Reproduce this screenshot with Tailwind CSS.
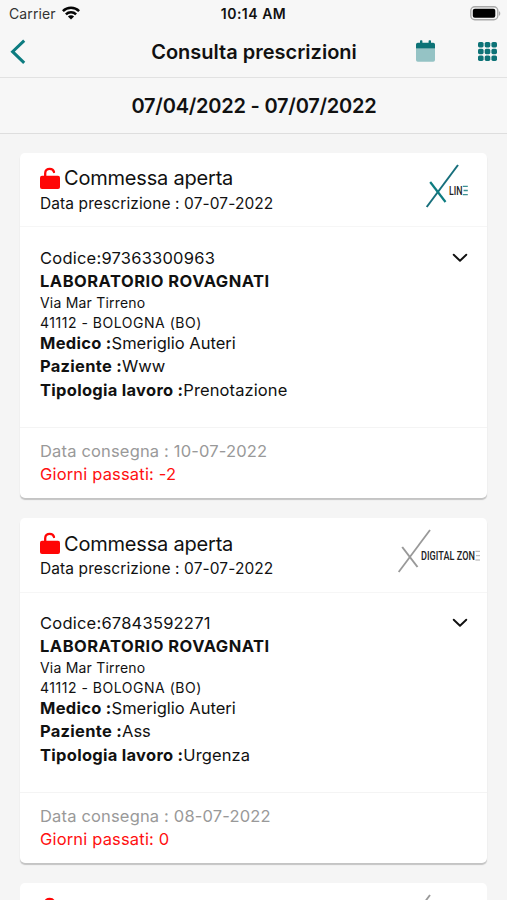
<!DOCTYPE html>
<html lang="it">
<head>
    <meta charset="UTF-8">
    <meta name="viewport" content="width=device-width, initial-scale=1.0">
    <title>Consulta prescrizioni</title>
    <script src="https://cdn.jsdelivr.net/npm/@tailwindcss/browser@4"></script>
</head>
<body class="bg-[#f5f5f5] font-['Inter','Liberation_Sans',sans-serif] text-[#111] h-[900px] overflow-hidden">

    <!-- Shared icons -->
    <svg class="hidden">
        <symbol id="unlock" viewBox="0 0 20 22">
            <path d="M5.2 10V6.2C5.2 3.4 7.2 1.8 9.7 1.8c2.2 0 3.8 1.2 4.3 3.2" fill="none" stroke="#ff0505" stroke-width="2.3" stroke-linecap="round"/>
            <rect x="0" y="8.8" width="20" height="13.2" rx="2" fill="#ff0505"/>
        </symbol>
        <symbol id="chevron" viewBox="0 0 16 10">
            <path d="M1.7 1.7 8 7.8l6.3-6.1" fill="none" stroke="#111" stroke-width="1.9" stroke-linecap="round" stroke-linejoin="round"/>
        </symbol>
    </svg>

    <div class="bg-[#f7f7f7]">
        <!-- Status bar -->
        <div class="relative flex h-[27px] items-center justify-between pl-[9px] pr-[6px]">
            <div class="flex items-center gap-[6px]">
                <span class="text-[14px] tracking-[0.12px] text-[#333]">Carrier</span>
                <svg class="mb-[2px] h-[14px] w-[18px]" viewBox="0 0 18 14" fill="none" stroke="#050505" stroke-width="2.5">
                    <path d="M.9 5.1a11.5 11.5 0 0 1 16.2 0"/>
                    <path d="M3.9 8.4a7.2 7.2 0 0 1 10.2 0"/>
                    <path d="M9 13.6 5.9 10.5a4.4 4.4 0 0 1 6.2 0z" fill="#050505" stroke="none"/>
                </svg>
            </div>
            <span class="absolute inset-x-0 text-center text-[14px] font-semibold tracking-[0.5px]">10:14 AM</span>
            <svg class="h-[15px] w-[31px]" viewBox="0 0 31 15">
                <rect x="0.8" y="0.8" width="27" height="13" rx="4" fill="#f7f7f7" stroke="#a9a9a9" stroke-width="1.4"/>
                <rect x="2.8" y="2.8" width="22.5" height="9" rx="2" fill="#000"/>
                <path d="M29 5.2c1.7.6 1.7 4 0 4.6z" fill="#a9a9a9"/>
            </svg>
        </div>

        <!-- Navigation bar -->
        <div class="relative flex h-[51px] items-center justify-between border-b border-[#e2e2e2] pl-[10px] pr-[10px]">
            <svg class="h-[26px] w-[16px]" viewBox="0 0 16 26">
                <path d="M14.2 1.6 2.6 12.7l11.6 11.2" fill="none" stroke="#0d7c80" stroke-width="3"/>
            </svg>
            <h1 class="absolute inset-x-0 pl-px text-center text-[20px] font-semibold">Consulta prescrizioni</h1>
            <div class="mb-[2px] flex items-center gap-[43px]">
                <svg class="h-[22px] w-[19px]" viewBox="0 0 19 22">
                    <path d="M0 8.5h19V20a1.8 1.8 0 0 1-1.8 1.8H1.8A1.8 1.8 0 0 1 0 20z" fill="#95c3c5"/>
                    <path d="M1.8 2.8H4V1a.8.8 0 0 1 .8-.8h.8a.8.8 0 0 1 .8.8v1.8h6.2V1a.8.8 0 0 1 .8-.8h.8A.8.8 0 0 1 15 1v1.8h2.2A1.8 1.8 0 0 1 19 4.6v3.9H0V4.6a1.8 1.8 0 0 1 1.8-1.8z" fill="#0d7377"/>
                </svg>
                <svg class="h-[19px] w-[19px]" viewBox="0 0 19 19" fill="#0d7377">
                    <rect width="5.6" height="5.4" rx="1.6"/><rect x="6.7" width="5.6" height="5.4" rx="1.6"/><rect x="13.4" width="5.6" height="5.4" rx="1.6"/>
                    <rect y="6.8" width="5.6" height="5.4" rx="1.6"/><rect x="6.7" y="6.8" width="5.6" height="5.4" rx="1.6"/><rect x="13.4" y="6.8" width="5.6" height="5.4" rx="1.6"/>
                    <rect y="13.5" width="5.6" height="5.4" rx="1.6"/><rect x="6.7" y="13.5" width="5.6" height="5.4" rx="1.6"/><rect x="13.4" y="13.5" width="5.6" height="5.4" rx="1.6"/>
                </svg>
            </div>
        </div>

        <!-- Date range -->
        <div class="flex h-[56px] items-center justify-center border-b border-[#dedede] pl-px text-[20px] font-semibold tracking-[-0.23px]">
            07/04/2022 - 07/07/2022
        </div>
    </div>

    <!-- Prescriptions -->
    <main class="flex flex-col gap-5 px-5 pt-[19px]">
        <section class="h-[345px] shrink-0 rounded-[5px] bg-white shadow-[0_2px_1px_#c4c4c4]">
            <div class="flex h-[74px] justify-between border-b border-[#f6f6f6] pl-5 pt-[13px]">
                <div>
                    <div class="flex h-[25px] items-center gap-[4px]">
                        <svg class="mb-[2px] h-[22px] w-[20px]"><use href="#unlock"/></svg>
                        <h2 class="-mt-px text-[20px] tracking-[-0.2px]">Commessa aperta</h2>
                    </div>
                    <p class="text-[15.5px] leading-[25px] tracking-[0.1px]">Data prescrizione : 07-07-2022</p>
                </div>
                <svg class="-mt-[3px] mr-[18px] h-[48px] w-[44px] overflow-visible" viewBox="0 0 44 48">
                    <path d="M33 2 1.7 44" stroke="#176f7c" stroke-width="2"/>
                    <path d="m5.2 19 15.3 20" stroke="#0d7c80" stroke-width="2.2"/>
                    <text x="24" y="32" textLength="13.5" lengthAdjust="spacingAndGlyphs" font-family="Roboto" font-size="13" font-weight="500" fill="#222">LIN</text>
                    <path d="M37.8 23.3h5M38.6 27.5h4.2M37.8 31.7h5" stroke="#3b9093" stroke-width="1.3"/>
                </svg>
            </div>
            <div class="flex h-[200px] justify-between pl-5 pr-[19px] pt-[20px] text-[16.5px] leading-[23.2px]">
                <div>
                    <p class="tracking-[0.22px]">Codice:97363300963</p>
                    <p class="font-bold tracking-[0.5px]">LABORATORIO ROVAGNATI</p>
                    <p class="text-[14px] leading-[19.4px] tracking-[0.2px]">Via Mar Tirreno</p>
                    <p class="text-[14px] leading-[19.4px] tracking-[0.52px]">41112 - BOLOGNA (BO)</p>
                    <p><b class="tracking-[0.28px]">Medico :</b>Smeriglio Auteri</p>
                    <p><b class="tracking-[0.28px]">Paziente :</b>Www</p>
                    <p><b class="tracking-[0.28px]">Tipologia lavoro :</b><span class="tracking-[0.1px]">Prenotazione</span></p>
                </div>
                <svg class="mt-[6px] h-[10px] w-[16px]"><use href="#chevron"/></svg>
            </div>
            <div class="border-t border-[#f4f4f4] pl-5 pt-[12px] text-[16.5px] leading-[23.2px] tracking-[0.17px]">
                <p class="text-[#999]">Data consegna : 10-07-2022</p>
                <p class="text-[#ff1010]">Giorni passati: -2</p>
            </div>
        </section>

        <section class="h-[345px] shrink-0 rounded-[5px] bg-white shadow-[0_2px_1px_#c4c4c4]">
            <div class="flex h-[75px] justify-between border-b border-[#f6f6f6] pl-5 pt-[13px]">
                <div>
                    <div class="flex h-[25px] items-center gap-[4px]">
                        <svg class="mb-[2px] h-[22px] w-[20px]"><use href="#unlock"/></svg>
                        <h2 class="text-[20px] tracking-[-0.2px]">Commessa aperta</h2>
                    </div>
                    <p class="text-[15.5px] leading-[25px] tracking-[0.1px]">Data prescrizione : 07-07-2022</p>
                </div>
                <svg class="-mt-[3px] mr-[6px] h-[48px] w-[84px] overflow-visible" viewBox="0 0 84 48">
                    <path d="M33 2 1.7 44" stroke="#999" stroke-width="1.8"/>
                    <path d="m5.2 19 15.3 20" stroke="#999" stroke-width="2"/>
                    <!-- condensed lettering -->
                    <g transform="translate(24 32) scale(.7 1)">
                        <text font-family="Roboto" font-size="13" font-weight="500" textLength="77" lengthAdjust="spacing" fill="#222">DIGITAL ZON</text>
                    </g>
                    <path d="M78.4 23.3h4.6M79 27.7h4M78.4 32h4.6" stroke="#aaa" stroke-width="1"/>
                </svg>
            </div>
            <div class="flex h-[199px] justify-between pl-5 pr-[19px] pt-[19px] text-[16.5px] leading-[23.2px]">
                <div>
                    <p class="tracking-[0.22px]">Codice:67843592271</p>
                    <p class="font-bold tracking-[0.5px]">LABORATORIO ROVAGNATI</p>
                    <p class="text-[14px] leading-[19.4px] tracking-[0.2px]">Via Mar Tirreno</p>
                    <p class="text-[14px] leading-[19.4px] tracking-[0.52px]">41112 - BOLOGNA (BO)</p>
                    <p><b class="tracking-[0.28px]">Medico :</b>Smeriglio Auteri</p>
                    <p><b class="tracking-[0.28px]">Paziente :</b>Ass</p>
                    <p><b class="tracking-[0.28px]">Tipologia lavoro :</b><span class="tracking-[0.1px]">Urgenza</span></p>
                </div>
                <svg class="mt-[6px] h-[10px] w-[16px]"><use href="#chevron"/></svg>
            </div>
            <div class="border-t border-[#f4f4f4] pl-5 pt-[12px] text-[16.5px] leading-[23.2px] tracking-[0.17px]">
                <p class="text-[#999]">Data consegna : 08-07-2022</p>
                <p class="text-[#ff1010]">Giorni passati: 0</p>
            </div>
        </section>

        <!-- Next card, cut off by the bottom of the screen -->
        <section class="flex h-[345px] shrink-0 items-start justify-between rounded-[5px] bg-white pl-5 pr-[6px] pt-[13px]">
            <svg class="mt-[1px] h-[22px] w-[20px]"><use href="#unlock"/></svg>
            <svg class="-mt-[3px] h-[48px] w-[84px]" viewBox="0 0 84 48">
                <path d="M33 2 1.7 44" stroke="#999" stroke-width="1.8"/>
            </svg>
        </section>
    </main>

</body>
</html>
